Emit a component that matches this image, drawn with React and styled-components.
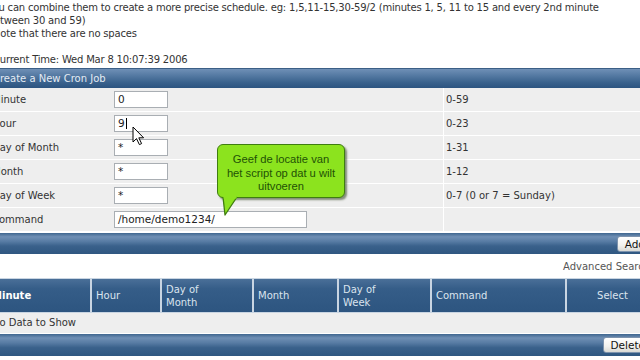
import React from "react";
import styled, { createGlobalStyle } from "styled-components";

const GlobalStyle = createGlobalStyle`
  html, body {
    margin: 0;
    padding: 0;
    background: #ffffff;
    overflow: hidden;
  }
  body {
    font-family: "DejaVu Sans", Verdana, sans-serif;
    font-size: 10px;
    color: #333333;
  }
`;

const cronFields = [
  { label: "Minute", value: "0", range: "0-59" },
  { label: "Hour", value: "9", range: "0-23", caret: true },
  { label: "Day of Month", value: "*", range: "1-31" },
  { label: "Month", value: "*", range: "1-12" },
  { label: "Day of Week", value: "*", range: "0-7 (0 or 7 = Sunday)" },
  { label: "Command", value: "/home/demo1234/", range: "", wide: true },
];

const listColumns = [
  { title: ["Minute"], bold: true },
  { title: ["Hour"] },
  { title: ["Day of", "Month"] },
  { title: ["Month"] },
  { title: ["Day of", "Week"] },
  { title: ["Command"] },
  { title: ["Select"], center: true },
];

const App = () => {
  return (
    <>
      <GlobalStyle />
      <Page>
        <Intro>
          <Line>
            You can combine them to create a more precise schedule. eg: 1,5,11-15,30-59/2 (minutes 1, 5, 11 to 15 and every 2nd minute
          </Line>
          <Line>between 30 and 59)</Line>
          <Line $indent>Note that there are no spaces</Line>
          <Line />
          <Line $indent>Current Time: Wed Mar 8 10:07:39 2006</Line>
        </Intro>

        <HeaderBar>Create a New Cron Job</HeaderBar>
        <FormGrid>
          {cronFields.map((f) => (
            <React.Fragment key={f.label}>
              <LabelCell>{f.label}</LabelCell>
              <InputCell>
                <Field $wide={f.wide}>
                  {f.value}
                  {f.caret && <Caret />}
                </Field>
              </InputCell>
              <RangeCell>{f.range}</RangeCell>
            </React.Fragment>
          ))}
        </FormGrid>
        <FooterBar>
          <Button>Add</Button>
        </FooterBar>

        <SearchLine>Advanced Search</SearchLine>

        <ListHeader>
          {listColumns.map((c) => (
            <HeadCell key={c.title.join(" ")} $bold={c.bold} $center={c.center}>
              <div>
                {c.title.map((t) => (
                  <div key={t}>{t}</div>
                ))}
              </div>
            </HeadCell>
          ))}
        </ListHeader>
        <EmptyRow>No Data to Show</EmptyRow>
        <FooterBar $tall>
          <Button>Delete</Button>
        </FooterBar>

        <Tooltip>
          Geef de locatie van
          <br />
          het script op dat u wilt
          <br />
          uitvoeren
          <Tail width="22" height="20" viewBox="0 0 22 20">
            <path d="M2 0 L4 18 L16 0" fill="#8ce31e" stroke="#3f7d10" strokeWidth="1.3" strokeLinejoin="round" />
            <rect x="2.6" y="0" width="13" height="1.6" fill="#8ce31e" />
          </Tail>
        </Tooltip>

        <Cursor width="13" height="20" viewBox="0 0 13 20">
          <path
            d="M1 1 L1 16 L4.5 12.6 L7.4 18.6 L9.6 17.6 L6.8 11.8 L11.6 11.8 Z"
            fill="#ffffff"
            stroke="#000000"
            strokeWidth="1"
            strokeLinejoin="miter"
          />
        </Cursor>
      </Page>
    </>
  );
};

const Page = styled.div`
  position: relative;
  width: 670px;
  margin-left: -12px;
`;

const Intro = styled.div`
  padding-top: 1px;
  padding-bottom: 2px;
  line-height: 13px;
  color: #333333;
  letter-spacing: -0.2px;
`;

const Line = styled.div`
  height: 13px;
  white-space: nowrap;
  padding-left: ${(p) => (p.$indent ? "5px" : "0")};
`;

const HeaderBar = styled.div`
  height: 19px;
  line-height: 19px;
  padding-left: 5px;
  color: #e4ebf3;
  background: linear-gradient(to bottom, #6f90b6 0%, #5479a2 35%, #3a628d 70%, #2c5480 100%);
  border-top: 1px solid #3c5f86;
`;

const FormGrid = styled.div`
  display: grid;
  grid-template-columns: 122px 334px 1fr;
  grid-auto-rows: 24px;
  background: #eeeeee;
`;

const cell = `
  display: flex;
  align-items: center;
  border-bottom: 1px solid #ffffff;
  box-sizing: border-box;
`;

const LabelCell = styled.div`
  ${cell}
  padding-left: 4px;
`;

const InputCell = styled.div`
  ${cell}
  padding-left: 4px;
  border-right: 1px solid #ffffff;
`;

const RangeCell = styled.div`
  ${cell}
  padding-left: 2px;
`;

const Field = styled.div`
  position: relative;
  box-sizing: border-box;
  width: ${(p) => (p.$wide ? "193px" : "54px")};
  height: 17px;
  line-height: 15px;
  padding-left: 3px;
  background: #ffffff;
  border: 1px solid #a9aeb3;
  color: #222222;
  font-size: 10.5px;
`;

const Caret = styled.span`
  display: inline-block;
  width: 1px;
  height: 11px;
  margin-left: 1px;
  vertical-align: -2px;
  background: #000000;
`;

const FooterBar = styled.div`
  display: flex;
  justify-content: flex-end;
  align-items: center;
  height: ${(p) => (p.$tall ? "22px" : "21px")};
  padding-right: 5px;
  margin-top: 1px;
  background: linear-gradient(
    to bottom,
    #3f668f 0%,
    #6f8fb4 18%,
    #587ca4 40%,
    #3a618b 62%,
    #2f5781 100%
  );
`;

const Button = styled.div`
  height: 16px;
  line-height: 15px;
  padding: 0 7px;
  box-sizing: border-box;
  border: 1px solid #7d93ad;
  border-radius: 3px;
  background: linear-gradient(to bottom, #ffffff 0%, #f1f1ee 60%, #d9d9d4 100%);
  color: #111111;
  font-size: 10.5px;
`;

const SearchLine = styled.div`
  height: 24px;
  line-height: 26px;
  text-align: right;
  padding-right: 8px;
  color: #555555;
`;

const ListHeader = styled.div`
  display: grid;
  grid-template-columns: 102px 68px 90px 83px 91px 133px 1fr;
  column-gap: 2px;
  height: 33px;
  border-top: 1px solid #c9d5e2;
  border-bottom: 1px solid #c9d5e2;
  background: #c9d5e2;
`;

const HeadCell = styled.div`
  display: flex;
  align-items: center;
  justify-content: ${(p) => (p.$center ? "center" : "flex-start")};
  padding: 0 4px;
  line-height: 13px;
  color: ${(p) => (p.$bold ? "#ffffff" : "#dbe4ee")};
  font-weight: ${(p) => (p.$bold ? "bold" : "normal")};
  background: linear-gradient(to bottom, #4a6f98 0%, #355d88 30%, #2d5580 100%);
`;

const EmptyRow = styled.div`
  height: 20px;
  line-height: 20px;
  padding-left: 4px;
  background: #eeeeee;
`;

const Tooltip = styled.div`
  position: absolute;
  left: 229px;
  top: 144px;
  width: 128px;
  height: 54px;
  box-sizing: border-box;
  padding-top: 8px;
  text-align: center;
  font-family: "Liberation Sans", Arial, sans-serif;
  font-size: 11.2px;
  line-height: 13.5px;
  color: #1f5206;
  background: #8ce31e;
  border: 1px solid #3f7d10;
  border-radius: 6px;
  box-shadow: 2px 2px 2px rgba(40, 60, 20, 0.55);
`;

const Tail = styled.svg`
  position: absolute;
  left: 3px;
  top: 52px;
  overflow: visible;
`;

const Cursor = styled.svg`
  position: absolute;
  left: 144px;
  top: 126px;
`;

export default App;
